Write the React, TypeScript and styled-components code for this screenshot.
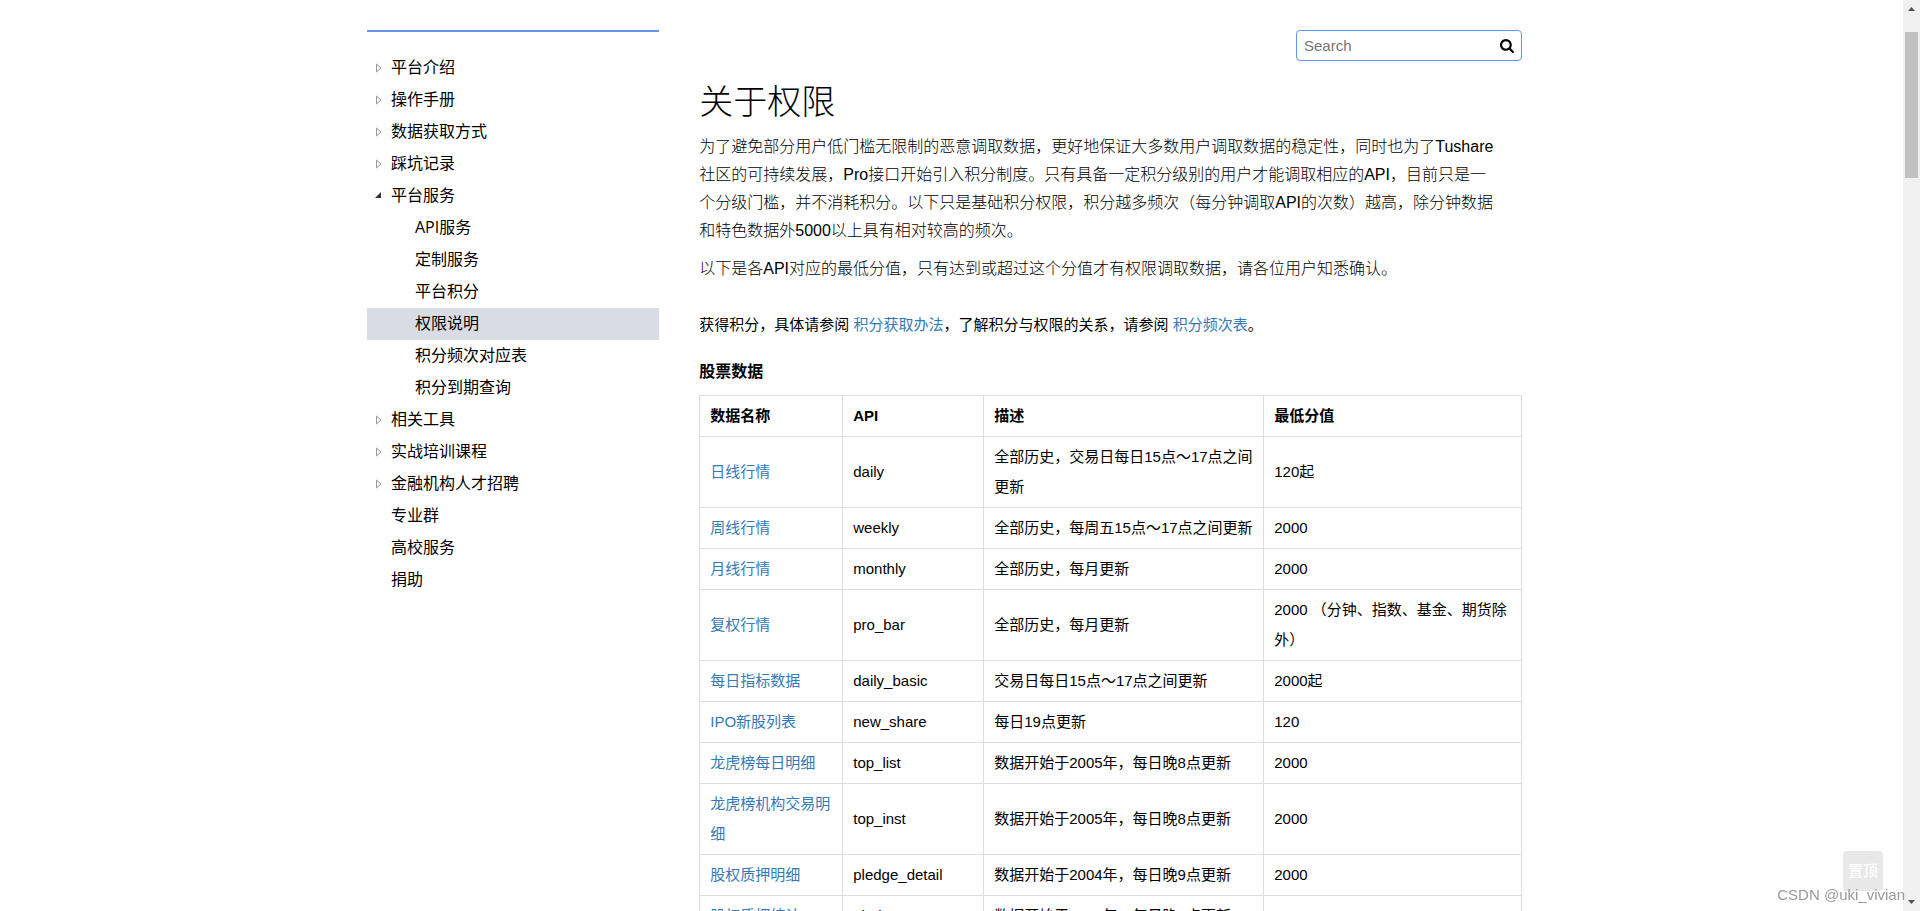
import React from 'react';
import styled, { createGlobalStyle, css } from 'styled-components';

const GlobalStyle = createGlobalStyle`
  * { box-sizing: border-box; }
  body {
    margin: 0;
    background: #fff;
    color: #000;
    font: 15px/30px "Liberation Sans", "Noto Sans CJK SC", sans-serif;
  }
`;

const Window = styled.div`
  display: flex;
  height: 100vh;
`;

const ScrollArea = styled.div`
  flex: 1;
  min-width: 0;
  overflow-y: auto;
  scrollbar-width: none;
`;

const Container = styled.div`
  display: flex;
  align-items: flex-start;
  max-width: 1169px;
  margin: 0 auto;
  padding-top: 30px;
`;

const Sidebar = styled.nav`
  flex: 0 0 25%;
  border-top: 2px solid #6495ed;
  padding-top: 20px;
`;

const Tree = styled.ul`
  margin: 0;
  padding: 0;
  list-style: none;
  font: 16px/30px "Open Sans", "Noto Sans CJK SC", sans-serif;
`;

const TreeLink = styled.a<{ $nested?: boolean; $active?: boolean }>`
  display: flex;
  align-items: center;
  height: 32px;
  padding-left: ${(p) => (p.$nested ? 48 : 8)}px;
  padding-bottom: 2px;
  color: #000;
  text-decoration: none;
  ${(p) => p.$active && css`background: #d9dce4;`}
`;

const ArrowSlot = styled.span`
  display: flex;
  width: 16px;
  padding-top: 2px;
`;

const Content = styled.main`
  flex: 1;
  min-width: 0;
  padding: 0 14px 40px 40px;
`;

const SearchForm = styled.form`
  display: flex;
  align-items: center;
  width: 226px;
  height: 31px;
  margin-left: auto;
  padding: 0 6px 0 7px;
  border: 1px solid #6495ed;
  border-radius: 4px;
`;

const SearchInput = styled.input`
  flex: 1;
  min-width: 0;
  padding: 0;
  border: 0;
  outline: 0;
  background: none;
  font: 15px "Liberation Sans", sans-serif;
  &::placeholder { color: #757575; }
`;

const SearchButton = styled.button`
  display: flex;
  padding: 0;
  border: 0;
  background: none;
`;

const Title = styled.h1`
  margin: 16px 0 6px;
  font-size: 34px;
  font-weight: 300;
  line-height: 50px;
`;

const Intro = styled.p`
  max-width: 800px;
  margin: 0 0 10px;
  font-size: 16px;
  font-weight: 300;
  line-height: 28px;
`;

const Note = styled.p`
  margin: 27px 0 22px;
`;

const SectionTitle = styled.h2`
  margin: 0 0 13px;
  font-size: 16px;
  line-height: 20px;
`;

const Link = styled.a`
  color: #337ab7;
  text-decoration: none;
`;

const DataTable = styled.table`
  width: 100%;
  table-layout: fixed;
  border-collapse: collapse;

  th, td {
    padding: 5px 10px;
    border: 1px solid #ddd;
    text-align: left;
  }
`;

const Col = styled.col<{ $width?: number }>`
  ${(p) => p.$width && css`width: ${p.$width}px;`}
`;

const TopButton = styled.button`
  position: fixed;
  right: 37px;
  bottom: 20px;
  width: 40px;
  height: 40px;
  padding: 0 0 4px;
  border: 0;
  border-radius: 4px;
  background: #e8e8e8;
  color: #fff;
  font: 500 15px "Noto Sans CJK SC", sans-serif;
`;

const Watermark = styled.div`
  position: fixed;
  right: 15px;
  bottom: 6px;
  color: #999;
  font: 15px/20px "Liberation Sans", sans-serif;
`;

const Scrollbar = styled.div`
  display: flex;
  flex-direction: column;
  align-items: center;
  width: 17px;
  padding: 7px 0;
  background: #f0f0f0;
`;

const Thumb = styled.div`
  width: 13px;
  height: 146px;
  margin: 21px 0 auto;
  background: #c1c1c1;
`;

type Item = { label: string; state?: 'closed' | 'open'; active?: boolean; children?: Item[] };

const menu: Item[] = [
  { label: '平台介绍', state: 'closed' },
  { label: '操作手册', state: 'closed' },
  { label: '数据获取方式', state: 'closed' },
  { label: '踩坑记录', state: 'closed' },
  {
    label: '平台服务',
    state: 'open',
    children: [
      { label: 'API服务' },
      { label: '定制服务' },
      { label: '平台积分' },
      { label: '权限说明', active: true },
      { label: '积分频次对应表' },
      { label: '积分到期查询' },
    ],
  },
  { label: '相关工具', state: 'closed' },
  { label: '实战培训课程', state: 'closed' },
  { label: '金融机构人才招聘', state: 'closed' },
  { label: '专业群' },
  { label: '高校服务' },
  { label: '捐助' },
];

const rows = [
  ['日线行情', 'daily', '全部历史，交易日每日15点～17点之间更新', '120起'],
  ['周线行情', 'weekly', '全部历史，每周五15点～17点之间更新', '2000'],
  ['月线行情', 'monthly', '全部历史，每月更新', '2000'],
  ['复权行情', 'pro_bar', '全部历史，每月更新', '2000 （分钟、指数、基金、期货除外）'],
  ['每日指标数据', 'daily_basic', '交易日每日15点～17点之间更新', '2000起'],
  ['IPO新股列表', 'new_share', '每日19点更新', '120'],
  ['龙虎榜每日明细', 'top_list', '数据开始于2005年，每日晚8点更新', '2000'],
  ['龙虎榜机构交易明细', 'top_inst', '数据开始于2005年，每日晚8点更新', '2000'],
  ['股权质押明细', 'pledge_detail', '数据开始于2004年，每日晚9点更新', '2000'],
  ['股权质押统计', 'pledge_stat', '数据开始于2014年，每日晚9点更新', '2000'],
];

const Arrow = ({ state }: { state?: Item['state'] }) => (
  <ArrowSlot>
    {state === 'closed' && (
      <svg width="8" height="10" viewBox="0 0 8 10" aria-hidden="true">
        <path d="M1.5 1v8L6 5z" fill="none" stroke="#9a9a9a" />
      </svg>
    )}
    {state === 'open' && (
      <svg width="8" height="10" viewBox="0 0 8 10" aria-hidden="true">
        <path d="M6 1v6H0z" fill="#333" />
      </svg>
    )}
  </ArrowSlot>
);

const TreeItems = ({ items, nested }: { items: Item[]; nested?: boolean }) => (
  <Tree>
    {items.map((item) => (
      <li key={item.label}>
        <TreeLink href="#" $nested={nested} $active={item.active}>
          {!nested && <Arrow state={item.state} />}
          {item.label}
        </TreeLink>
        {item.children && <TreeItems items={item.children} nested />}
      </li>
    ))}
  </Tree>
);

export default function App() {
  return (
    <>
      <GlobalStyle />
      <Window>
        <ScrollArea>
          <Container>
            <Sidebar>
              <TreeItems items={menu} />
            </Sidebar>
            <Content>
              <SearchForm onSubmit={(e) => e.preventDefault()}>
                <SearchInput type="text" placeholder="Search" aria-label="Search" />
                <SearchButton type="submit" aria-label="Submit search">
                  <svg width="15" height="15" viewBox="0 0 1792 1792">
                    <path d="M1152 832q0-185-131.5-316.5t-316.5-131.5-316.5 131.5-131.5 316.5 131.5 316.5 316.5 131.5 316.5-131.5 131.5-316.5zm512 832q0 52-38 90t-90 38q-54 0-90-38l-343-342q-179 124-399 124-143 0-273.5-55.5t-225-150-150-225-55.5-273.5 55.5-273.5 150-225 225-150 273.5-55.5 273.5 55.5 225 150 150 225 55.5 273.5q0 220-124 399l343 343q37 37 37 90z" />
                  </svg>
                </SearchButton>
              </SearchForm>
              <Title>关于权限</Title>
              <Intro>
                为了避免部分用户低门槛无限制的恶意调取数据，更好地保证大多数用户调取数据的稳定性，同时也为了Tushare社区的可持续发展，Pro接口开始引入积分制度。只有具备一定积分级别的用户才能调取相应的API，目前只是一个分级门槛，并不消耗积分。以下只是基础积分权限，积分越多频次（每分钟调取API的次数）越高，除分钟数据和特色数据外5000以上具有相对较高的频次。
              </Intro>
              <Intro>
                以下是各API对应的最低分值，只有达到或超过这个分值才有权限调取数据，请各位用户知悉确认。
              </Intro>
              <Note>
                获得积分，具体请参阅 <Link href="#">积分获取办法</Link>，了解积分与权限的关系，请参阅{' '}
                <Link href="#">积分频次表</Link>。
              </Note>
              <SectionTitle>股票数据</SectionTitle>
              <DataTable>
                <colgroup>
                  <Col $width={143} />
                  <Col $width={141} />
                  <Col $width={280} />
                  <Col />
                </colgroup>
                <thead>
                  <tr>
                    <th scope="col">数据名称</th>
                    <th scope="col">API</th>
                    <th scope="col">描述</th>
                    <th scope="col">最低分值</th>
                  </tr>
                </thead>
                <tbody>
                  {rows.map(([name, api, description, points]) => (
                    <tr key={api}>
                      <td><Link href="#">{name}</Link></td>
                      <td>{api}</td>
                      <td>{description}</td>
                      <td>{points}</td>
                    </tr>
                  ))}
                </tbody>
              </DataTable>
            </Content>
          </Container>
        </ScrollArea>
        <Scrollbar aria-hidden="true">
          <svg width="7" height="4" viewBox="0 0 7 4"><path d="M0 4L3.5 0L7 4z" fill="#505050" /></svg>
          <Thumb />
          <svg width="7" height="4" viewBox="0 0 7 4"><path d="M0 0L3.5 4L7 0z" fill="#505050" /></svg>
        </Scrollbar>
      </Window>
      <TopButton type="button">置顶</TopButton>
      <Watermark>CSDN @uki_vivian</Watermark>
    </>
  );
}
